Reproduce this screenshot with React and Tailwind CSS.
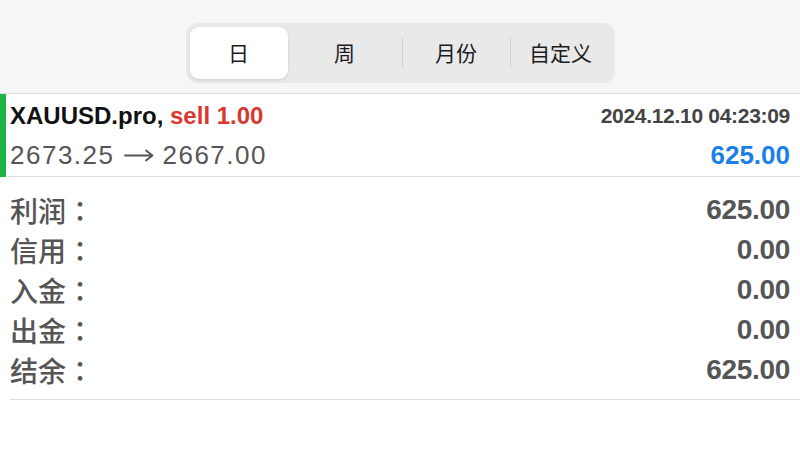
import React from "react";

const latin = { fontFamily: '"Liberation Sans", "Noto Sans CJK SC", sans-serif' };
const cjk = { fontFamily: '"Noto Sans CJK SC", "Liberation Sans", sans-serif' };
const cjkTC = { fontFamily: '"Noto Sans CJK TC", "Noto Sans CJK SC", sans-serif' };

const rows = [
  ["利润", "625.00"],
  ["信用", "0.00"],
  ["入金", "0.00"],
  ["出金", "0.00"],
  ["结余", "625.00"],
];

export default function App() {
  return (
    <div className="w-[800px] h-[476px] bg-white overflow-hidden" style={latin}>
      <div className="h-[94px] bg-[#f6f6f6] border-b border-[#dcdcdc] flex justify-center pt-[23px]">
        <div className="w-[429px] h-[60px] rounded-[12px] bg-[#e9e9e9] p-[4px] flex items-center" style={cjk}>
          <div className="w-[98px] h-full rounded-[9px] bg-white shadow-[0_1px_3px_rgba(0,0,0,0.12)] flex items-center justify-center text-[21px] text-[#1c1c1c]">日</div>
          <div className="w-[114px] flex items-center justify-center text-[21px] text-[#1c1c1c]">周</div>
          <div className="w-px h-[30px] bg-[#d0d0d0]" />
          <div className="w-[107px] flex items-center justify-center text-[21px] text-[#1c1c1c]">月份</div>
          <div className="w-px h-[30px] bg-[#d0d0d0]" />
          <div className="flex-1 flex items-center justify-center text-[21px] text-[#1c1c1c]">自定义</div>
        </div>
      </div>

      <div className="flex">
        <div className="w-[6px] bg-[#1db543]" />
        <div className="flex-1 ml-[2px] border-b border-[#dedede]">
          <div className="h-[42px] flex items-center justify-between pl-[2px] pr-[10px] pt-[2px]">
            <div className="text-[24px] font-bold">
              <span className="text-[#111]">XAUUSD.pro, </span>
              <span className="text-[#d8392e]">sell 1.00</span>
            </div>
            <div className="text-[21px] font-bold text-[#444] tracking-[-0.3px]">2024.12.10 04:23:09</div>
          </div>
          <div className="h-[40px] flex items-center justify-between pl-[2px] pr-[10px] pb-[2px]">
            <div className="flex items-center text-[26px] text-[#555] tracking-[1.5px]">
              <span>2673.25</span>
              <svg width="48" height="20" viewBox="0 0 48 20">
                <path d="M11 10.5H38M32 5.5L38.5 10.5L32 15.5" fill="none" stroke="#555" strokeWidth="1.8" strokeLinecap="round" strokeLinejoin="round" />
              </svg>
              <span>2667.00</span>
            </div>
            <div className="text-[26px] font-bold text-[#1a7fe8]">625.00</div>
          </div>
        </div>
      </div>

      <div className="ml-[10px] border-b border-[#dedede] pt-[13px] pb-[9px]">
        {rows.map(([k, v]) => (
          <div key={k} className="h-[40px] flex items-center justify-between pr-[10px]">
            <div className="text-[28px] font-medium text-[#555]" style={cjk}>
              {k}
              <span style={cjkTC}>：</span>
            </div>
            <div className="text-[28px] font-bold text-[#555] tracking-[-0.3px]">{v}</div>
          </div>
        ))}
      </div>
    </div>
  );
}
